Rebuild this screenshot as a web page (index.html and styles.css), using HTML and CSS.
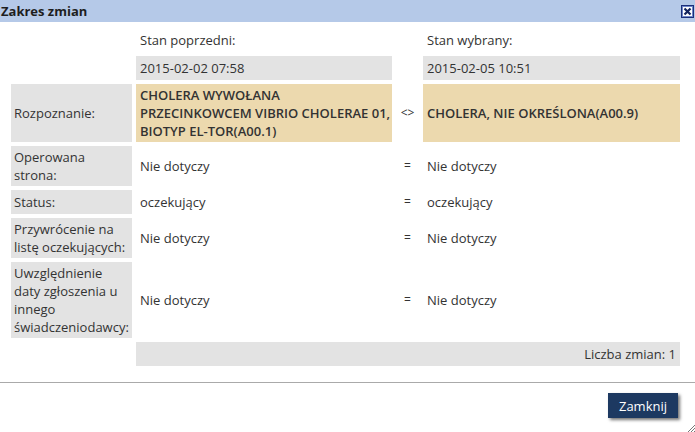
FILE: index.html
```html
<!DOCTYPE html>
<html lang="pl">
<head>
    <meta charset="UTF-8">
    <meta name="viewport" content="width=device-width, initial-scale=1.0">
    <title>Zakres zmian</title>
    <link rel="stylesheet" href="styles.css">
</head>
<body>
    <div class="dialog">
        <div class="titlebar">
            <span class="title">Zakres zmian</span>
            <span class="close-btn">
                <svg width="13" height="13" viewBox="0 0 13 13">
                    <rect x="0.5" y="0.5" width="12" height="12" fill="#fff" stroke="#1b2f7a"/>
                    <rect x="1.5" y="1.5" width="10" height="10" fill="none" stroke="#6f86c9"/>
                    <path d="M3.5 3.5 L9.5 9.5 M9.5 3.5 L3.5 9.5" stroke="#14245e" stroke-width="2.2"/>
                </svg>
            </span>
        </div>
        <div class="content">
            <table class="changes">
                <colgroup>
                    <col class="col-label">
                    <col class="col-value">
                    <col class="col-sep">
                    <col class="col-value2">
                </colgroup>
                <tr class="head">
                    <td></td>
                    <td>Stan poprzedni:</td>
                    <td></td>
                    <td>Stan wybrany:</td>
                </tr>
                <tr>
                    <td></td>
                    <td class="cell-grey">2015-02-02 07:58</td>
                    <td></td>
                    <td class="cell-grey">2015-02-05 10:51</td>
                </tr>
                <tr>
                    <td class="label">Rozpoznanie:</td>
                    <td class="changed nowrap">CHOLERA WYWOŁANA<br>PRZECINKOWCEM VIBRIO CHOLERAE 01,<br>BIOTYP EL-TOR(A00.1)</td>
                    <td class="sep">&lt;&gt;</td>
                    <td class="changed">CHOLERA, NIE OKREŚLONA(A00.9)</td>
                </tr>
                <tr>
                    <td class="label">Operowana strona:</td>
                    <td>Nie dotyczy</td>
                    <td class="sep">=</td>
                    <td>Nie dotyczy</td>
                </tr>
                <tr>
                    <td class="label">Status:</td>
                    <td>oczekujący</td>
                    <td class="sep">=</td>
                    <td>oczekujący</td>
                </tr>
                <tr>
                    <td class="label">Przywrócenie na listę oczekujących:</td>
                    <td>Nie dotyczy</td>
                    <td class="sep">=</td>
                    <td>Nie dotyczy</td>
                </tr>
                <tr>
                    <td class="label">Uwzględnienie daty zgłoszenia u innego świadczeniodawcy:</td>
                    <td>Nie dotyczy</td>
                    <td class="sep">=</td>
                    <td>Nie dotyczy</td>
                </tr>
                <tr>
                    <td></td>
                    <td class="cell-grey summary" colspan="3">Liczba zmian: 1</td>
                </tr>
            </table>
        </div>
        <div class="buttons">
            <button class="close-action">Zamknij</button>
        </div>
        <span class="grip">
            <svg width="8" height="8" viewBox="0 0 8 8">
                <path d="M8 1 L1 8 M8 4 L4 8 M8 7 L7 8" stroke="#777" stroke-width="1"/>
            </svg>
        </span>
    </div>
</body>
</html>
```

FILE: styles.css
```css
body {
    margin: 0;
    font-family: 'Open Sans', 'Liberation Sans', sans-serif;
    font-size: 13px;
    color: #333;
    background: #fff;
}

.dialog {
    position: relative;
    width: 695px;
    height: 432px;
    background: #fff;
}

.titlebar {
    display: flex;
    align-items: center;
    justify-content: space-between;
    height: 22px;
    background: #b5c9e8;
    padding: 0 1px 0 1px;
}

.title {
    font-weight: bold;
    font-size: 13px;
    color: #1e1e1e;
}

.close-btn {
    display: flex;
    margin-top: 1px;
}

.content {
    padding: 2px 0 12px 7px;
}

.changes {
    table-layout: fixed;
    border-collapse: separate;
    border-spacing: 4px;
    width: 677px;
    line-height: 18px;
}

.col-label { width: 121px; }
.col-value { width: 256px; }
.col-sep { width: 23px; }
.col-value2 { width: 257px; }

.changes td {
    padding: 2px 4px;
    height: 20px;
    vertical-align: middle;
}

.changes td.label {
    background: #e3e3e3;
    padding-left: 3px;
}

.cell-grey {
    background: #e3e3e3;
}

.changes td.changed {
    background: #ecd9ae;
    font-weight: 600;
    padding-right: 0;
}

.changes td.nowrap {
    white-space: nowrap;
    overflow: hidden;
}

.changes td.sep {
    text-align: center;
    padding: 0;
    font-size: 12px;
}

.summary {
    text-align: right;
}

.buttons {
    display: flex;
    justify-content: flex-end;
    border-top: 1px solid #aaa;
    padding: 10px 17px 0 0;
}

.close-action {
    font-family: 'Open Sans', 'Liberation Sans', sans-serif;
    font-size: 13px;
    color: #fff;
    background: #1d3961;
    border: none;
    height: 25px;
    width: 70px;
    padding: 0;
    box-shadow: 2px 2px 3px rgba(0, 0, 0, 0.55);
    cursor: pointer;
}

.grip {
    position: absolute;
    right: 0;
    bottom: 0;
    display: flex;
}
```
